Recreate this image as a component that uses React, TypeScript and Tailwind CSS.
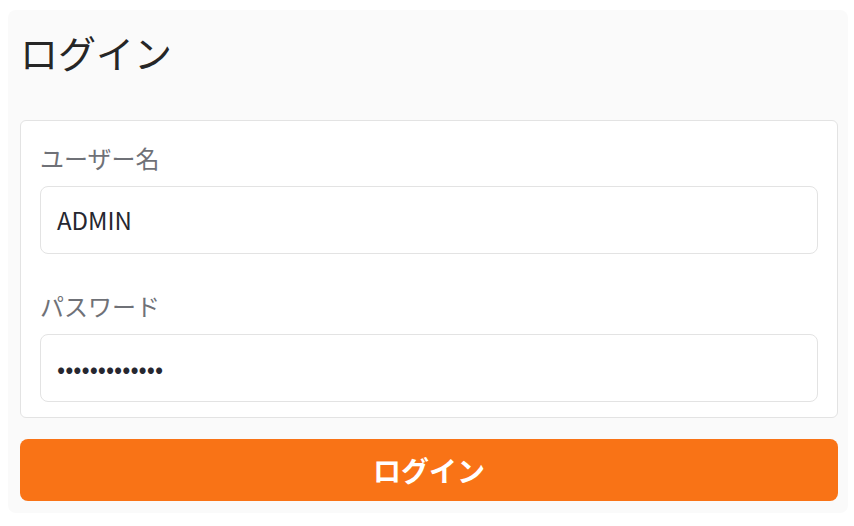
import React from "react"

const font = { fontFamily: '"Noto Sans CJK JP", "Noto Sans", sans-serif' }

export default function App() {
  return (
    <div className="min-h-[526px] bg-white pt-[10px] pl-[8px] pr-[6px]" style={font}>
      <div className="bg-[#fafafa] rounded-lg pl-3 pr-[10px] pb-3">
        {/* Title */}
        <h1 className="pt-[19px] pb-[45px] text-[38px] leading-[46px] font-normal text-[#262626]">
          ログイン
        </h1>

        {/* Form card */}
        <div className="bg-white border border-[#e3e3e3] rounded-md px-[19px] pt-[21px] pb-[15px]">
          <label className="block text-[24px] leading-[32px] text-[#6f7177]">ユーザー名</label>
          <div className="mt-3 h-[68px] border border-[#e3e3e3] rounded-lg flex items-center px-4">
            <span className="text-[24px] text-[#262730]">ADMIN</span>
          </div>

          <label className="block mt-9 text-[24px] leading-[32px] text-[#6f7177]">パスワード</label>
          <div className="mt-3 h-[68px] border border-[#e3e3e3] rounded-lg flex items-center px-4">
            <span className="text-[24px] text-[#262730]">•••••••••••••</span>
          </div>
        </div>

        {/* Submit */}
        <button className="mt-[21px] w-full h-[62px] rounded-lg bg-[#f97316] text-white text-[28px] font-bold flex items-center justify-center">
          ログイン
        </button>
      </div>
    </div>
  )
}
